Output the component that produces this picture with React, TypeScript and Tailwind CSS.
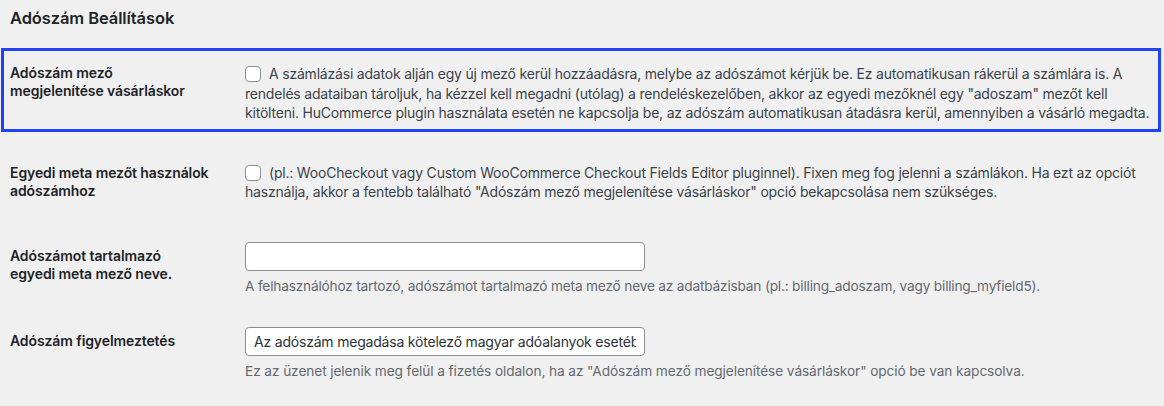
import React from "react";

const font = { fontFamily: "Inter, 'Noto Sans', sans-serif" };

function Checkbox() {
  return (
    <span className="relative -top-[1px] mr-[8px] inline-block h-[16px] w-[16px] rounded-[4px] border border-[#8c8f94] bg-white align-middle" />
  );
}

function Label({ children }: { children: React.ReactNode }) {
  return (
    <div className="w-[235px] shrink-0 pr-[10px] text-[14px] font-semibold leading-[18px] tracking-[-0.1px] text-[#1d2327]">
      {children}
    </div>
  );
}

export default function App() {
  return (
    <div
      className="min-h-[406px] bg-[#f0f0f1] pl-[1px] pr-[3px] text-[14px] text-[#3c434a] tracking-[-0.2px]"
      style={font}
    >
      <h2 className="pl-[9px] pt-[6px] text-[16.5px] font-semibold leading-[24px] tracking-[-0.1px] text-[#1d2327]">
        Adószám Beállítások
      </h2>

      {/* kiemelt sor */}
      <div className="mt-[18px] flex border-[3px] border-[#1f43f5] pl-[6px] pr-[6px] pb-[6px] pt-[13px]">
        <Label>
          Adószám mező
          <br />
          megjelenítése vásárláskor
        </Label>
        <div className="flex-1 leading-[19.6px]">
          <Checkbox />A számlázási adatok alján egy új mező kerül hozzáadásra, melybe az adószámot kérjük be. Ez automatikusan rákerül a számlára is. A rendelés adataiban tároljuk, ha kézzel kell megadni (utólag) a rendeléskezelőben, akkor az egyedi mezőknél egy "adoszam" mezőt kell kitölteni. HuCommerce plugin használata esetén ne kapcsolja be, az adószám automatikusan átadásra kerül, amennyiben a vásárló megadta.
        </div>
      </div>

      <div className="mt-[12px] flex h-[83px] pl-[9px] pr-[12px] pt-[20px]">
        <Label>
          Egyedi meta mezőt használok
          <br />
          adószámhoz
        </Label>
        <div className="flex-1 leading-[19.6px] -mt-[1px]">
          <Checkbox />(pl.: WooCheckout vagy Custom WooCommerce Checkout Fields Editor pluginnel). Fixen meg fog jelenni a számlákon. Ha ezt az opciót használja, akkor a fentebb található "Adószám mező megjelenítése vásárláskor" opció bekapcsolása nem szükséges.
        </div>
      </div>

      <div className="flex h-[85px] pl-[9px] pr-[12px]">
        <div className="pt-[20px]">
          <Label>
            Adószámot tartalmazó
            <br />
            egyedi meta mező neve.
          </Label>
        </div>
        <div className="flex-1 pt-[15px]">
          <input
            className="box-border block h-[29px] w-[400px] rounded-[4px] border border-[#8c8f94] bg-white px-[8px] text-[14px] tracking-[-0.2px] text-[#2c3338] outline-none"
            style={font}
            defaultValue=""
          />
          <p className="mt-[5px] text-[13.7px] leading-[20px] text-[#646970]">
            A felhasználóhoz tartozó, adószámot tartalmazó meta mező neve az adatbázisban (pl.: billing_adoszam, vagy billing_myfield5).
          </p>
        </div>
      </div>

      <div className="flex pl-[9px] pr-[12px]">
        <div className="pt-[20px]">
          <Label>Adószám figyelmeztetés</Label>
        </div>
        <div className="flex-1 pt-[15px]">
          <input
            className="box-border block h-[29px] w-[400px] rounded-[4px] border border-[#8c8f94] bg-white px-[8px] text-[14px] tracking-[-0.2px] text-[#2c3338] outline-none"
            style={font}
            defaultValue="Az adószám megadása kötelező magyar adóalanyok esetében."
          />
          <p className="mt-[5px] text-[13.7px] leading-[20px] tracking-[-0.1px] text-[#646970]">
            Ez az üzenet jelenik meg felül a fizetés oldalon, ha az "Adószám mező megjelenítése vásárláskor" opció be van kapcsolva.
          </p>
        </div>
      </div>
    </div>
  );
}
